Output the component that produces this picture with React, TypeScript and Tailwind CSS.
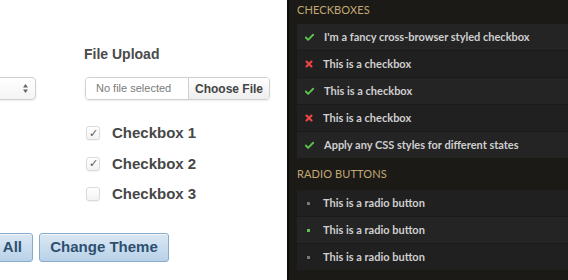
import { Check, X } from "lucide-react";

const checkRows = [
  { on: true, label: "I'm a fancy cross-browser styled checkbox" },
  { on: false, label: "This is a checkbox" },
  { on: true, label: "This is a checkbox" },
  { on: false, label: "This is a checkbox" },
  { on: true, label: "Apply any CSS styles for different states" },
];

const radioRows = [
  { on: false, label: "This is a radio button" },
  { on: true, label: "This is a radio button" },
  { on: false, label: "This is a radio button" },
];

function LightCheckbox({ checked, label }: { checked: boolean; label: string }) {
  return (
    <label className="flex items-center h-[30.5px]">
      <span className="w-[14px] h-[14px] rounded-[3px] border border-[#dadada] bg-gradient-to-b from-white to-[#f3f3f3] shadow-[0_1px_1px_rgba(0,0,0,0.05)] flex items-center justify-center text-[11px] leading-none text-[#5a5a5a]">
        {checked ? "✓" : ""}
      </span>
      <span className="ml-[12px] text-[15px] font-bold text-[#474747]">{label}</span>
    </label>
  );
}

export default function App() {
  return (
    <div className="flex w-[568px] h-[280px] overflow-hidden font-['Liberation_Sans',Arial,sans-serif]">
      {/* 左侧：浅色表单 */}
      <div className="w-[287px] shrink-0 bg-white overflow-hidden flex flex-col">
        <div className="flex">
          <div className="shrink-0 w-[186px] -ml-[150px] pt-[77px]">
            <div className="h-[23px] rounded-[4px] border border-[#d0d0d0] bg-gradient-to-b from-white to-[#f4f4f4] shadow-[0_1px_2px_rgba(0,0,0,0.08)] flex items-center justify-end pr-[6px]">
              <svg width="7" height="11" viewBox="0 0 7 11">
                <path d="M3.5 1 L6 4.5 H1 Z" fill="#666" />
                <path d="M3.5 10 L6 6.5 H1 Z" fill="#666" />
              </svg>
            </div>
          </div>
          <div className="ml-[49px] pt-[45px]">
            <div className="text-[14px] font-bold text-[#4a4a4a] leading-[18px] -ml-[1px]">File Upload</div>
            <div className="mt-[14px] flex h-[23px] w-[185px] rounded-[4px] border border-[#d0d0d0] shadow-[0_1px_2px_rgba(0,0,0,0.08)] overflow-hidden">
              <div className="w-[102px] flex items-center pl-[10px] text-[11px] text-[#7a7a7a] bg-white">
                No file selected
              </div>
              <div className="flex-1 flex items-center justify-center border-l border-[#d0d0d0] bg-gradient-to-b from-white to-[#eeeeee] text-[12px] font-bold text-[#444]">
                Choose File
              </div>
            </div>
            <div className="mt-[18px] ml-[1px]">
              <LightCheckbox checked label="Checkbox 1" />
              <LightCheckbox checked label="Checkbox 2" />
              <LightCheckbox checked={false} label="Checkbox 3" />
            </div>
          </div>
        </div>
        <div className="flex gap-[6px] mt-[23px] -ml-[77px]">
          <button className="w-[110px] h-[29px] pr-[10px] text-right rounded-[3px] border border-[#86abcc] bg-gradient-to-b from-[#dbe8f4] to-[#b8d1e8] text-[15px] font-bold text-[#2e4f70] shadow-[inset_0_1px_0_rgba(255,255,255,0.6)]">
            Select All
          </button>
          <button className="w-[130px] h-[29px] rounded-[3px] border border-[#86abcc] bg-gradient-to-b from-[#dbe8f4] to-[#b8d1e8] text-[15px] font-bold text-[#2e4f70] shadow-[inset_0_1px_0_rgba(255,255,255,0.6)]">
            Change Theme
          </button>
        </div>
      </div>

      {/* 右侧：深色样式列表 */}
      <div className="flex-1 bg-[#1b1a17] border-l-2 border-[#0c0c0b] pl-[8px] font-['Lato',sans-serif]">
        <div className="h-[24px] pt-[3px] text-[11px] leading-[13px] text-[#c2a873] tracking-[0.01em]">CHECKBOXES</div>
        <div className="flex flex-col gap-px">
          {checkRows.map((r, i) => (
            <div
              key={i}
              className={`h-[26px] flex items-center pl-[7px] ${i % 2 === 0 ? "bg-[#242424]" : "bg-[#202020]"}`}
            >
              {r.on ? (
                <Check size={11} strokeWidth={4} className="text-[#5cc44f]" />
              ) : (
                <X size={10} strokeWidth={5} className="text-[#ee4444]" />
              )}
              <span className="ml-[9px] text-[11px] font-bold text-[#cfcfcf]">{r.label}</span>
            </div>
          ))}
        </div>
        <div className="h-[32px] pt-[1px] flex items-center text-[11px] text-[#c2a873] tracking-[0.01em]">RADIO BUTTONS</div>
        <div className="flex flex-col gap-px">
          {radioRows.map((r, i) => (
            <div
              key={i}
              className={`h-[26px] flex items-center pl-[10px] ${i % 2 === 1 ? "bg-[#242424]" : "bg-[#202020]"}`}
            >
              <span className={`w-[3px] h-[3px] ${r.on ? "bg-[#5cc44f]" : "bg-[#777]"}`} />
              <span className="ml-[13px] text-[11px] font-bold text-[#cfcfcf]">{r.label}</span>
            </div>
          ))}
        </div>
      </div>
    </div>
  );
}
